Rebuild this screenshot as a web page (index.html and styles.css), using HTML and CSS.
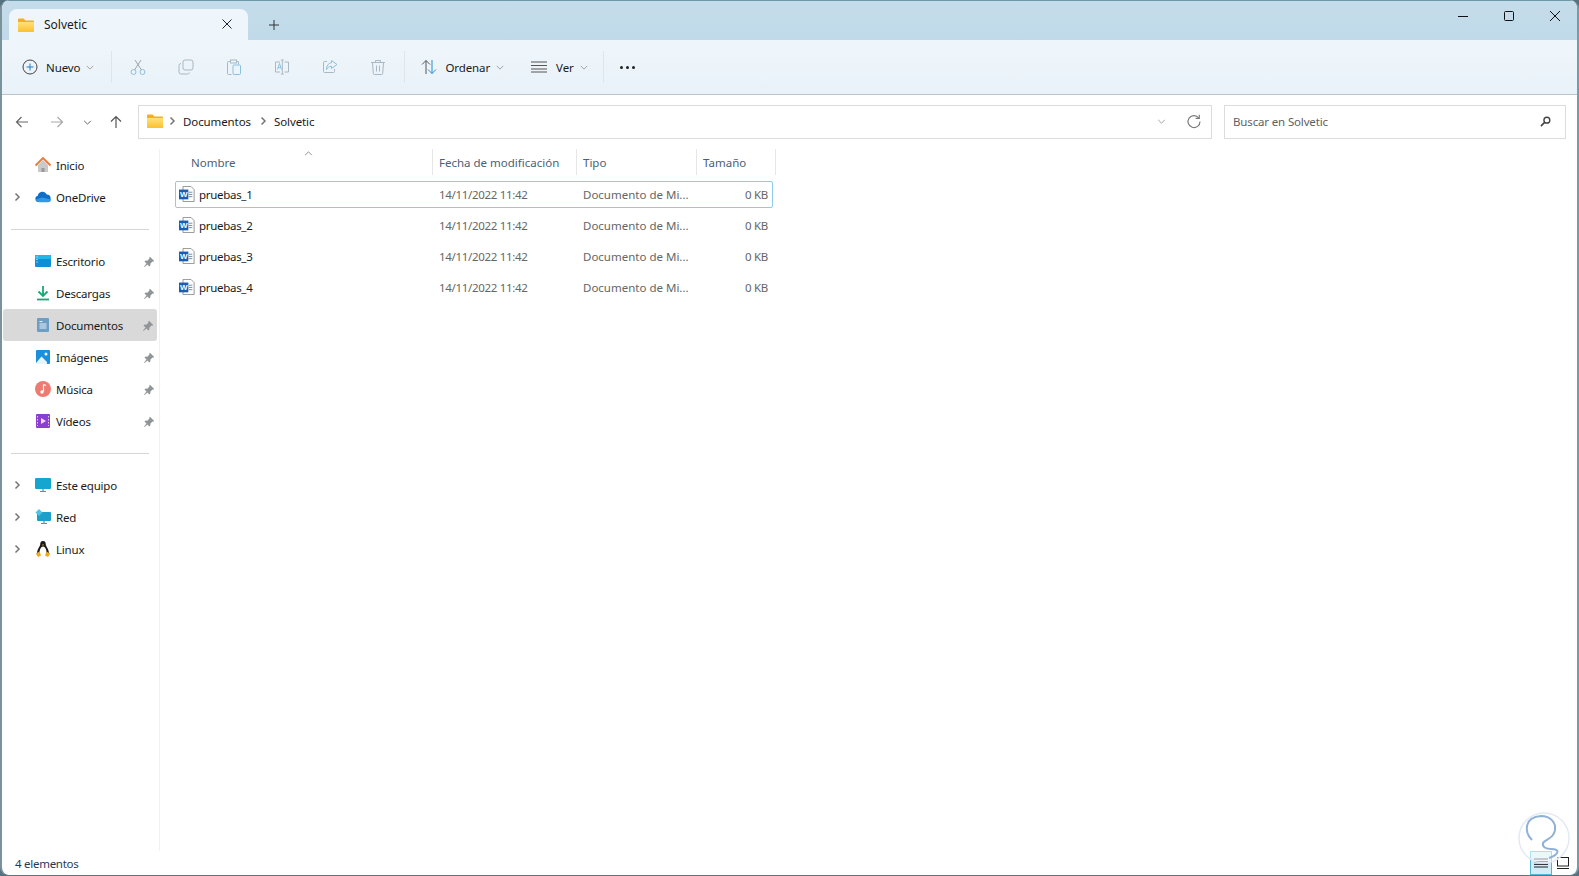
FILE: index.html
```html
<!DOCTYPE html>
<html lang="es">
<head>
<meta charset="utf-8">
<title>Solvetic</title>
<link rel="stylesheet" href="styles.css">
</head>
<body>
<svg class="defs" width="0" height="0">
  <defs>
    <linearGradient id="fold" x1="0" y1="0" x2="0" y2="1"><stop offset="0" stop-color="#ffe27a"/><stop offset="1" stop-color="#fbc02d"/></linearGradient>
    <symbol id="folder" viewBox="0 0 16 14"><path d="M0 1.500A1 1 0 0 1 1 .5h4.500l2 2H15a1 1 0 0 1 1 1V13a1 1 0 0 1-1 1H1a1 1 0 0 1-1-1z" fill="#f2b01e"/><path d="M0 4h16v9a1 1 0 0 1-1 1H1a1 1 0 0 1-1-1z" fill="url(#fold)"/></symbol>
    <symbol id="chev-r" viewBox="0 0 8 10"><path d="M2.500 1.500 6 5 2.500 8.500" fill="none" stroke="#767676" stroke-width="1.500"/></symbol>
    <symbol id="chev-d" viewBox="0 0 10 6"><path d="M1 1l4 4 4-4" fill="none" stroke="#9a9a9a" stroke-width="1.100"/></symbol>
    <symbol id="pin" viewBox="0 0 12 12"><path d="M7 .8l4.200 4.200-1 .8-.7-.3-2.200 2.200.1 1.800-1 1-2-2L1.400 11 1 10.600l2.500-3-2-2 1-1 1.800.1 2.200-2.200-.3-.7z" fill="#8f9498"/></symbol>
    <symbol id="word" viewBox="0 0 18 18"><path d="M4.500.5h9l3.500 3.500v13.500h-12.500z" fill="#fff" stroke="#8b8b8b"/><path d="M11 7h4M11 9.500h4M11 12h4" stroke="#6a7f99" stroke-width="1"/><rect x="0" y="4" width="10.500" height="11" fill="#1a5db5"/><text x="5.250" y="12.700" class="word-w">W</text></symbol>
  </defs>
</svg>
<div class="window">
  <header class="titlebar">
    <div class="tab">
      <svg class="tab-folder"><use href="#folder"/></svg>
      <span class="tab-label">Solvetic</span>
      <svg class="tab-close" viewBox="0 0 10 10"><path d="M.5.5l9 9M9.500.5l-9 9" stroke="#222" stroke-width="1"/></svg>
    </div>
    <svg class="tab-add" viewBox="0 0 10 10"><path d="M5 0v10M0 5h10" stroke="#333" stroke-width="1"/></svg>
    <div class="winctl">
      <svg class="ctl" viewBox="0 0 12 12"><path d="M1 6.500h10" stroke="#111" stroke-width="1"/></svg>
      <svg class="ctl" viewBox="0 0 12 12"><rect x="1.500" y="1.500" width="9" height="9" rx="1" fill="none" stroke="#111"/></svg>
      <svg class="ctl" viewBox="0 0 12 12"><path d="M1 1l10 10M11 1L1 11" stroke="#111"/></svg>
    </div>
  </header>

  <div class="toolbar">
    <button class="tool tool-new">
      <svg class="ti" viewBox="0 0 16 16"><circle cx="8" cy="8" r="7" fill="none" stroke="#444" stroke-width="1"/><path d="M8 4.500v7M4.500 8h7" stroke="#1f7fc4" stroke-width="1"/></svg>
      <span>Nuevo</span><svg class="cd"><use href="#chev-d"/></svg>
    </button>
    <i class="sep"></i>
    <div class="icons">
      <svg class="ti dim" viewBox="0 0 16 16"><circle cx="3.500" cy="13" r="2.500" fill="none" stroke="#8cc0e0"/><circle cx="12.500" cy="13" r="2.500" fill="none" stroke="#8cc0e0"/><path d="M4.500 11L11 1M11.500 11L5 1" stroke="#9aa7b0" fill="none"/></svg>
      <svg class="ti dim" viewBox="0 0 16 16"><rect x="5" y="1" width="10" height="10" rx="2" fill="none" stroke="#a8b8c4"/><path d="M3 4.500A2 2 0 0 0 1 6.500V13a2 2 0 0 0 2 2h6.500a2 2 0 0 0 2-1.500" fill="none" stroke="#a8b8c4"/></svg>
      <svg class="ti dim" viewBox="0 0 16 16"><path d="M5 2.500H2.500a1 1 0 0 0-1 1v11a1 1 0 0 0 1 1h3M11 2.500h1.500v3" fill="none" stroke="#a8b8c4"/><rect x="4.500" y="1" width="6" height="3" fill="none" stroke="#a8b8c4"/><rect x="7" y="6" width="7.500" height="9.500" rx="1" fill="none" stroke="#8cc0e0"/></svg>
      <svg class="ti dim" viewBox="0 0 16 16"><path d="M6 3H1.500v10H6M10.500 3h4v10h-4" fill="none" stroke="#a8b8c4"/><path d="M8.300 1v14M6.800 1h3M6.800 15h3" stroke="#a8b8c4" fill="none"/><path d="M3.500 10.500l2-6 2 6M4.200 8.700h2.600" stroke="#8cc0e0" fill="none"/></svg>
      <svg class="ti dim" viewBox="0 0 16 16"><path d="M5 2.500H2.500a1 1 0 0 0-1 1v9a1 1 0 0 0 1 1h9a1 1 0 0 0 1-1V10" fill="none" stroke="#a8b8c4"/><path d="M9.500 1.500L15 5.500l-5.500 4V7.300C7 7.300 5.500 8.500 4.500 10.500c0-4 2-6.500 5-6.800z" fill="none" stroke="#8cc0e0"/></svg>
      <svg class="ti dim" viewBox="0 0 16 16"><path d="M1 3.500h14M5.500 3.500V1.500h5v2M2.500 3.500l.8 11a1 1 0 0 0 1 1h7.400a1 1 0 0 0 1-1l.8-11M6.500 6.500v6M9.500 6.500v6" fill="none" stroke="#a8b8c4"/></svg>
    </div>
    <i class="sep sep-b"></i>
    <button class="tool tool-sort">
      <svg class="ti" viewBox="0 0 16 16"><path d="M5 15V1.500M1 5.500l4-4 4 4" fill="none" stroke="#555"/><path d="M11 1v13.500M7 10.500l4 4 4-4" fill="none" stroke="#1f8ed6"/></svg>
      <span>Ordenar</span><svg class="cd"><use href="#chev-d"/></svg>
    </button>
    <button class="tool tool-view">
      <svg class="ti" viewBox="0 0 16 16"><path d="M0 3h16M0 6.500h16M0 10h16M0 13h16" stroke="#555" stroke-width="1"/></svg>
      <span>Ver</span><svg class="cd"><use href="#chev-d"/></svg>
    </button>
    <i class="sep sep-c"></i>
    <div class="dots"><i></i><i></i><i></i></div>
  </div>

  <nav class="navbar">
    <svg class="na" viewBox="0 0 14 14"><path d="M13 7H1.500M6.500 2l-5 5 5 5" fill="none" stroke="#666" stroke-width="1.200"/></svg>
    <svg class="na na-fwd" viewBox="0 0 14 14"><path d="M1 7h11.500M7.500 2l5 5-5 5" fill="none" stroke="#a8a8a8" stroke-width="1.200"/></svg>
    <svg class="na-down" viewBox="0 0 10 6"><path d="M1 1l4 4 4-4" fill="none" stroke="#666" stroke-width="1.200"/></svg>
    <svg class="na na-up" viewBox="0 0 14 14"><path d="M7 13V1.500M2 6.500l5-5 5 5" fill="none" stroke="#555" stroke-width="1.200"/></svg>
    <div class="address">
      <svg class="addr-folder"><use href="#folder"/></svg>
      <svg class="crumb-chev"><use href="#chev-r"/></svg>
      <span>Documentos</span>
      <svg class="crumb-chev"><use href="#chev-r"/></svg>
      <span>Solvetic</span>
      <svg class="addr-down"><use href="#chev-d"/></svg>
      <svg class="addr-ref" viewBox="0 0 14 14"><path d="M11.800 4A6 6 0 1 0 13 7.500" fill="none" stroke="#777" stroke-width="1.100"/><path d="M12.300.8V4.400H8.700" fill="none" stroke="#777" stroke-width="1.100"/></svg>
    </div>
    <div class="search">
      <span>Buscar en Solvetic</span>
      <svg class="s-ico" viewBox="0 0 12 12"><circle cx="7.500" cy="4.500" r="3.200" fill="none" stroke="#444" stroke-width="1.500"/><path d="M5 7l-4 4" stroke="#444" stroke-width="1.700"/></svg>
    </div>
  </nav>

  <div class="body">
    <aside class="sidebar">
      <div class="item">
        <span class="exp"></span>
        <svg class="si" viewBox="0 0 16 16"><path d="M3 8v7h10V8L8 3z" fill="#c9c9c9"/><path d="M6.500 15v-4h3v4z" fill="#9a9a9a"/><path d="M.5 8.500L8 1l7.500 7.500" fill="none" stroke="#e8793a" stroke-width="1.800"/></svg>
        <span class="lbl">Inicio</span>
      </div>
      <div class="item">
        <svg class="exp"><use href="#chev-r"/></svg>
        <svg class="si" viewBox="0 0 16 16"><path d="M3.500 13a3.200 3.200 0 0 1-.7-6.300 4.800 4.800 0 0 1 9-1.300A3.900 3.900 0 0 1 13 13z" fill="#0f6fc6"/><path d="M3.500 13.200A3 3 0 0 1 1 10.500l6-2 9 2a3 3 0 0 1-3 2.700z" fill="#2c9ae8"/></svg>
        <span class="lbl">OneDrive</span>
      </div>
      <hr class="rule">
      <div class="item">
        <span class="exp"></span>
        <svg class="si" viewBox="0 0 16 16"><rect y="2" width="16" height="12" rx="1" fill="#0e8fd6"/><rect y="2" width="16" height="4" fill="#22b5e8"/><path d="M1.500 4h1M1.500 6.500h1M1.500 9h1" stroke="#fff"/></svg>
        <span class="lbl">Escritorio</span>
        <svg class="pin"><use href="#pin"/></svg>
      </div>
      <div class="item">
        <span class="exp"></span>
        <svg class="si" viewBox="0 0 16 16"><path d="M8 1v9.500M3.500 6.500L8 11l4.500-4.500" fill="none" stroke="#18a878" stroke-width="1.800"/><path d="M2 14.500h12" stroke="#18a878" stroke-width="1.800"/></svg>
        <span class="lbl">Descargas</span>
        <svg class="pin"><use href="#pin"/></svg>
      </div>
      <div class="item item-on">
        <span class="exp"></span>
        <svg class="si" viewBox="0 0 16 16"><rect x="2" y="1" width="12" height="14" rx="1" fill="#6d9fc4"/><path d="M4.500 4.500h3M4.500 7h7M4.500 9h7M4.500 11h7" stroke="#e8f1f7"/></svg>
        <span class="lbl">Documentos</span>
        <svg class="pin"><use href="#pin"/></svg>
      </div>
      <div class="item">
        <span class="exp"></span>
        <svg class="si" viewBox="0 0 16 16"><rect x="1" y="1" width="14" height="14" rx="1" fill="#1a8fdc"/><path d="M1 14l5.500-6.500L12 13v2H1z" fill="#e6f4fc"/><circle cx="11" cy="5" r="1.500" fill="#fff"/></svg>
        <span class="lbl">Imágenes</span>
        <svg class="pin"><use href="#pin"/></svg>
      </div>
      <div class="item">
        <span class="exp"></span>
        <svg class="si" viewBox="0 0 16 16"><circle cx="8" cy="8" r="8" fill="#ee7b72"/><path d="M8.500 3.500v7" stroke="#fff" stroke-width="1.200"/><path d="M8.500 3.500l2.500 1" stroke="#fff" stroke-width="1.200"/><circle cx="7" cy="11" r="1.700" fill="#fff"/></svg>
        <span class="lbl">Música</span>
        <svg class="pin"><use href="#pin"/></svg>
      </div>
      <div class="item">
        <span class="exp"></span>
        <svg class="si" viewBox="0 0 16 16"><rect x="1" y="1" width="14" height="14" rx="1" fill="#8a3fd1"/><path d="M6 5l5 3-5 3z" fill="#f3d9ff"/><path d="M2.500 3v10M13.500 3v10" stroke="#e2c6fa" stroke-dasharray="1.500 1.500"/></svg>
        <span class="lbl">Vídeos</span>
        <svg class="pin"><use href="#pin"/></svg>
      </div>
      <hr class="rule">
      <div class="item">
        <svg class="exp"><use href="#chev-r"/></svg>
        <svg class="si" viewBox="0 0 16 16"><rect y="1" width="16" height="11" rx="1" fill="#14a6cf"/><path d="M5 14.500h6M8 12v2.500" stroke="#5d8ea5" stroke-width="1.200"/></svg>
        <span class="lbl">Este equipo</span>
      </div>
      <div class="item">
        <svg class="exp"><use href="#chev-r"/></svg>
        <svg class="si" viewBox="0 0 16 16"><rect x="2" y="3" width="14" height="9" rx="1" fill="#1c9fc9"/><path d="M6 14.500h6M9 12v2.500" stroke="#5d8ea5" stroke-width="1.200"/><path d="M4 0l3.500 3.500L4 7 .5 3.500z" fill="#4cc4e6"/></svg>
        <span class="lbl">Red</span>
      </div>
      <div class="item">
        <svg class="exp"><use href="#chev-r"/></svg>
        <svg class="si" viewBox="0 0 16 16"><path d="M8 0c2.200 0 2.800 1.800 2.800 3.500 0 2 3.200 4.500 3.200 9H2c0-4.500 3.200-7 3.200-9C5.200 1.800 5.800 0 8 0z" fill="#1c1c1c"/><path d="M8 5.500c2 0 3.500 3 3.500 6S9.800 14.500 8 14.500s-3.500-.3-3.500-3 1.500-6 3.500-6z" fill="#fff"/><path d="M7 3.500h2L8 5z" fill="#eda91c"/><path d="M.8 12.500L4.500 10.500 6 14.500l-3 1.500zM15.200 12.500L11.500 10.500 10 14.500l3 1.500z" fill="#eda91c"/></svg>
        <span class="lbl">Linux</span>
      </div>
    </aside>

    <main class="files">
      <div class="heads">
        <div class="head">Nombre<svg class="sort" viewBox="0 0 10 6"><path d="M1 5l4-4 4 4" fill="none" stroke="#777" stroke-width="1"/></svg></div>
        <div class="head">Fecha de modificación</div>
        <div class="head">Tipo</div>
        <div class="head">Tamaño</div>
      </div>
      <div class="row row-on">
        <div class="name"><svg class="doc"><use href="#word"/></svg>pruebas_1</div>
        <div class="cell date">14/11/2022 11:42</div><div class="cell">Documento de Mi...</div><div class="cell size">0 KB</div>
      </div>
      <div class="row">
        <div class="name"><svg class="doc"><use href="#word"/></svg>pruebas_2</div>
        <div class="cell date">14/11/2022 11:42</div><div class="cell">Documento de Mi...</div><div class="cell size">0 KB</div>
      </div>
      <div class="row">
        <div class="name"><svg class="doc"><use href="#word"/></svg>pruebas_3</div>
        <div class="cell date">14/11/2022 11:42</div><div class="cell">Documento de Mi...</div><div class="cell size">0 KB</div>
      </div>
      <div class="row">
        <div class="name"><svg class="doc"><use href="#word"/></svg>pruebas_4</div>
        <div class="cell date">14/11/2022 11:42</div><div class="cell">Documento de Mi...</div><div class="cell size">0 KB</div>
      </div>
    </main>
  </div>

  <footer class="status">
    <span class="count">4 elementos</span>
    <div class="views">
      <div class="view view-on"><svg class="vi" viewBox="0 0 14 10"><path d="M0 1h14M0 3.700h14M0 6.400h14M0 9h14" stroke="#222"/></svg></div>
      <div class="view"><svg class="vi vi-big" viewBox="0 0 12 12"><rect x=".5" y=".5" width="11" height="8.500" fill="none" stroke="#222"/><path d="M0 11.500h12" stroke="#222"/></svg></div>
    </div>
  </footer>

  <svg class="mark" viewBox="0 0 56 56"><circle cx="28" cy="28" r="25" fill="#fff" fill-opacity=".55" stroke="#e3e9f3" stroke-width="1.500"/><path d="M16 30C8 22 8 7 25 6c10 0 15 7 14 14-1 9-10 9-12 13-1 4 3 6 8 6 4 0 8 1 6 4-1 2-5 4-8 5" fill="none" stroke="#8fb1d6" stroke-width="2"/></svg>
</div>
</body>
</html>
```
FILE: styles.css
```css
* { box-sizing: border-box; }
html, body { margin: 0; height: 100%; }
body { background: #55727f; font-family: "Noto Sans", "Liberation Sans", sans-serif; font-size: 11.5px; letter-spacing: -0.1px; color: #1a1a1a; overflow: hidden; }
.defs { position: absolute; }
svg { display: block; flex: none; overflow: visible; }
.word-w { font: bold 9px "Liberation Sans", sans-serif; fill: #fff; text-anchor: middle; }

.window { position: relative; height: 876px; display: flex; flex-direction: column; background: #fff; border-radius: 9px; border-left: 2px solid #7a929c; border-right: 2px solid #7b9aa8; border-bottom: 1px solid #5c7687; overflow: hidden; }

.titlebar { height: 40px; flex: none; display: flex; align-items: flex-end; padding-left: 7px; background: linear-gradient(#c5dcea, #c0dae9); border-top: 1px solid #6d98aa; }
.tab { width: 239px; height: 31px; display: flex; align-items: center; padding: 0 14px 0 9px; background: #eef6fb; border-radius: 8px 8px 0 0; }
.tab-folder { width: 16px; height: 14px; margin-right: 10px; }
.tab-label { flex: 1; font-size: 12px; letter-spacing: 0; }
.tab-close { width: 10px; height: 10px; margin-right: 2px; margin-top: -2px; }
.tab-add { width: 10px; height: 10px; margin: 0 0 10px 21px; }
.winctl { margin-left: auto; align-self: flex-start; display: flex; gap: 34px; padding: 9px 16px 0 0; }
.ctl { width: 12px; height: 12px; }

.toolbar { height: 55px; flex: none; display: flex; align-items: center; background: linear-gradient(#eff6fb, #e9f2f9); border-bottom: 1px solid #b9c4cc; }
.tool { display: flex; align-items: center; border: 0; background: none; padding: 0; font: inherit; letter-spacing: inherit; color: #1a1a1a; }
.ti { width: 16px; height: 16px; }
.tool span { margin-left: 8px; }
.tool .cd { width: 8px; height: 5px; margin-left: 6px; }
.tool-new { margin-left: 20px; }
.tool-sort { margin-left: 16px; }
.tool-view { margin-left: 27px; }
.tool-view span { margin-left: 9px; }
.sep { width: 1px; height: 32px; background: #dfe6eb; margin-left: 17px; }
.sep-b { margin-left: 2px; }
.sep-c { margin-left: 15px; }
.icons { display: flex; margin-left: 2px; }
.icons .dim { width: 16px; height: 16px; margin: 0 16px; }
.dots { display: flex; gap: 3px; margin-left: 16px; }
.dots i { width: 3px; height: 3px; border-radius: 50%; background: #222; }

.navbar { height: 54px; flex: none; display: flex; align-items: center; }
.na { width: 14px; height: 14px; margin-left: 13px; }
.na-fwd { margin-left: 21px; }
.na-down { width: 9px; height: 5px; margin-left: 19px; }
.na-up { margin-left: 17px; }
.address { width: 1074px; height: 34px; margin-left: 15px; display: flex; align-items: center; padding: 0 10px 2px 8px; border: 1px solid #dcdcdc; background: #fff; }
.addr-folder { width: 16px; height: 14px; }
.crumb-chev { width: 8px; height: 10px; margin: 0 7px 0 8px; }
.address .addr-folder + .crumb-chev { margin-left: 5px; margin-right: 7px; }
.addr-down { width: 9px; height: 5px; margin-left: auto; }
.addr-ref { width: 14px; height: 14px; margin-left: 21px; }
.search { width: 342px; height: 34px; margin-left: 12px; display: flex; align-items: center; justify-content: space-between; padding: 0 14px 2px 8px; border: 1px solid #dcdcdc; color: #5f5f5f; letter-spacing: -0.15px; }
.s-ico { width: 11px; height: 11px; }

.body { flex: 1; display: flex; min-height: 0; }
.sidebar { width: 158px; flex: none; border-right: 1px solid #f1f1f1; padding-right: 1px; }
.item { height: 32px; display: flex; align-items: center; margin-left: 1px; border-radius: 3px; }
.item-on { background: #d9d9d9; width: 154px; }
.exp { width: 8px; height: 10px; margin-left: 10px; }
.si { width: 16px; height: 16px; margin-left: 14px; }
.lbl { margin-left: 5px; letter-spacing: -0.2px; }
.pin { width: 12px; height: 12px; margin: 2px 3px 0 auto; }
.rule { height: 1px; border: 0; background: #d6d6d6; margin: 16px 9px 15px 9px; }

.files { flex: 1; padding-left: 15px; }
.heads, .row { display: grid; }
.heads { grid-template-columns: 258px 144px 120px 79px; width: 601px; height: 32px; letter-spacing: 0; }
.row { grid-template-columns: 258px 144px 120px 76px; width: 598px; height: 27px; margin-bottom: 4px; align-items: center; border: 1px solid transparent; }
.head { position: relative; display: flex; align-items: center; padding-left: 6px; color: #4a5f78; border-right: 1px solid #e6e6e6; margin: 0 0 6px; }
.head:first-child { padding-left: 16px; }
.sort { position: absolute; left: 129px; top: 2px; width: 9px; height: 5px; }
.row-on { border-color: #8dcbe6; border-radius: 2px; }
.name { display: flex; align-items: center; gap: 4px; padding-left: 3px; letter-spacing: -0.3px; }
.doc { width: 16px; height: 16px; margin-top: -1px; }
.cell { padding-left: 5px; color: #666; letter-spacing: 0; }
.date { letter-spacing: -0.32px; }
.size { text-align: right; padding: 0 6px 0 0; letter-spacing: -0.3px; }

.status { height: 24px; flex: none; display: flex; align-items: center; justify-content: space-between; padding-left: 13px; color: #1f3a5c; }
.count { letter-spacing: -0.27px; }
.views { display: flex; align-self: stretch; padding-right: 3px; }
.view { width: 22px; display: flex; align-items: center; justify-content: center; }
.view-on { background: #d2edf8; border: 1px solid #4fb6d8; }
.vi { width: 14px; height: 12px; }
.vi-big { width: 12px; height: 12px; }
.mark { position: absolute; right: 5px; bottom: 9px; width: 56px; height: 56px; }
```
